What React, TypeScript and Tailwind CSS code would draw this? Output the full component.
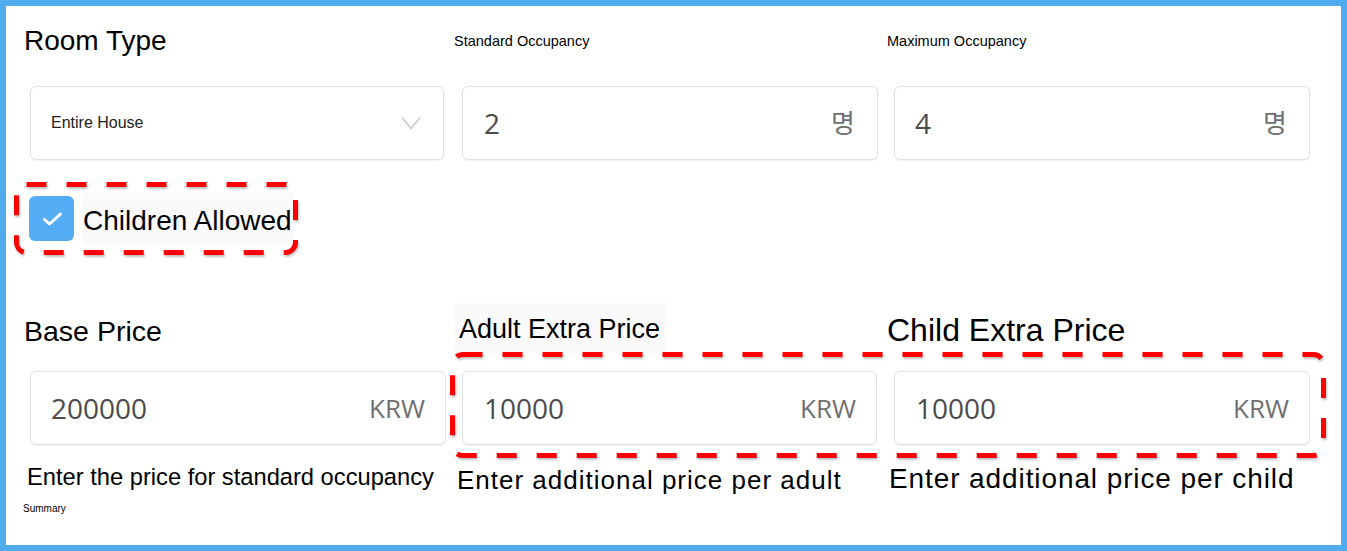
// Room pricing form — room type / occupancy, children toggle, extra prices
import type { ReactNode } from 'react';

const SANS = 'font-["Liberation_Sans",Arial,sans-serif]';

// Red dashed annotation frame drawn over a block
const DashedFrame = ({ className }: { className: string }) => (
  <svg className={`pointer-events-none absolute overflow-visible ${className}`} width="100%" height="100%">
    <rect
      x="2.5" y="2.5"
      width="calc(100% - 5px)" height="calc(100% - 5px)"
      rx="10" ry="10"
      fill="none" stroke="#ff0000" strokeWidth="5" strokeDasharray="20 20"
      style={{ filter: 'drop-shadow(1px 2px 1px rgba(0,0,0,0.25))' }}
    />
  </svg>
);

const Field = ({ className, children }: { className: string; children: ReactNode }) => (
  <div className={`h-[74px] flex items-center justify-between rounded-[6px] border border-[#dde1e6] bg-white shadow-[0_1px_2px_rgba(0,0,0,0.06)] ${className}`}>
    {children}
  </div>
);

const NumValue = ({ children }: { children: ReactNode }) => (
  <span className='font-["Open_Sans",sans-serif] text-[28px] text-[#4b4b4b]'>{children}</span>
);

const Unit = ({ children }: { children: ReactNode }) => (
  <span className='font-["Open_Sans","Noto_Sans_CJK_KR",sans-serif] text-[26px] text-[#6f6f6f]'>{children}</span>
);

export default function App() {
  return (
    <div className={`h-[551px] w-[1347px] border-[6px] border-[#51abef] bg-white pt-[18px] pl-[18px] text-black ${SANS}`}>
      {/* ── Room type & occupancy ── */}
      <div className="grid grid-cols-[430px_433px_1fr]">
        <div>
          <div className="h-[62px] pt-[1px] text-[28px] leading-[32px]">Room Type</div>
          <Field className="ml-[6px] w-[414px] pl-[20px] pr-[22px]">
            <span className="text-[16px] text-[#222]">Entire House</span>
            <svg width="20" height="14" viewBox="0 0 20 14" fill="none" stroke="#c9c9c9" strokeWidth="1.5">
              <path d="M1 1.5l9 11 9-11" />
            </svg>
          </Field>
        </div>
        <div>
          <div className="h-[62px] pt-[9px] text-[14.5px] leading-[16px]">Standard Occupancy</div>
          <Field className="ml-[8px] w-[416px] pl-[21px] pr-[22px]">
            <NumValue>2</NumValue>
            <Unit>명</Unit>
          </Field>
        </div>
        <div>
          <div className="h-[62px] pt-[9px] text-[14.5px] leading-[16px]">Maximum Occupancy</div>
          <Field className="ml-[7px] w-[416px] pl-[20px] pr-[22px]">
            <NumValue>4</NumValue>
            <Unit>명</Unit>
          </Field>
        </div>
      </div>

      {/* ── Children allowed ── */}
      <div className="relative mt-[22px] flex h-[73px] w-[274px] items-center pl-[5px]">
        <div className="flex h-[45px] w-[45px] items-center justify-center rounded-[6px] bg-[#55aef5]">
          <svg width="24" height="24" viewBox="0 0 24 24" fill="none" stroke="white" strokeWidth="3" strokeLinecap="round" strokeLinejoin="round" className="ml-[2px]">
            <path d="M3.5 12.5l5 4.5L19.5 7" />
          </svg>
        </div>
        <div className="ml-[9px] flex h-[52px] items-center bg-[#fafafa] pr-[2px] pt-[5px] text-[28px] leading-[32px]">
          Children Allowed
        </div>
        <DashedFrame className="left-[-10px] top-0 h-[73px] w-[284px]" />
      </div>

      {/* ── Prices ── */}
      <div className="mt-[48px] grid grid-cols-[430px_433px_1fr]">
        <div className="h-[68px] pt-[12px] text-[28.5px] leading-[32px]">Base Price</div>
        <div className="h-[68px]">
          <div className="ml-[1px] h-[50px] w-[211px] bg-[#fafafa] pl-[4px] pt-[11px] text-[27px] leading-[31px]">
            Adult Extra Price
          </div>
        </div>
        <div className="h-[68px] pt-[9px] text-[32px] leading-[36px]">Child Extra Price</div>
      </div>

      <div className="relative grid grid-cols-[430px_433px_1fr]">
        <Field className="ml-[6px] w-[416px] pl-[20px] pr-[20px]">
          <NumValue>200000</NumValue>
          <Unit>KRW</Unit>
        </Field>
        <Field className="ml-[8px] w-[415px] pl-[21px] pr-[20px]">
          <NumValue>10000</NumValue>
          <Unit>KRW</Unit>
        </Field>
        <Field className="ml-[7px] w-[416px] pl-[21px] pr-[20px]">
          <NumValue>10000</NumValue>
          <Unit>KRW</Unit>
        </Field>
        <DashedFrame className="left-[426px] top-[-19px] h-[106px] w-[876px]" />
      </div>

      <div className="grid grid-cols-[430px_433px_1fr] items-start">
        <div className="ml-[3px] mt-[18px] text-[23.7px] leading-[28px]">Enter the price for standard occupancy</div>
        <div className="ml-[3px] mt-[20px] text-[26px] leading-[30px] tracking-[1px]">Enter additional price per adult</div>
        <div className="ml-[2px] mt-[18px] text-[28px] leading-[32px] tracking-[0.9px]">Enter additional price per child</div>
      </div>

      <div className="ml-[-1px] mt-[8px] text-[10px] leading-[12px]">Summary</div>
    </div>
  );
}
